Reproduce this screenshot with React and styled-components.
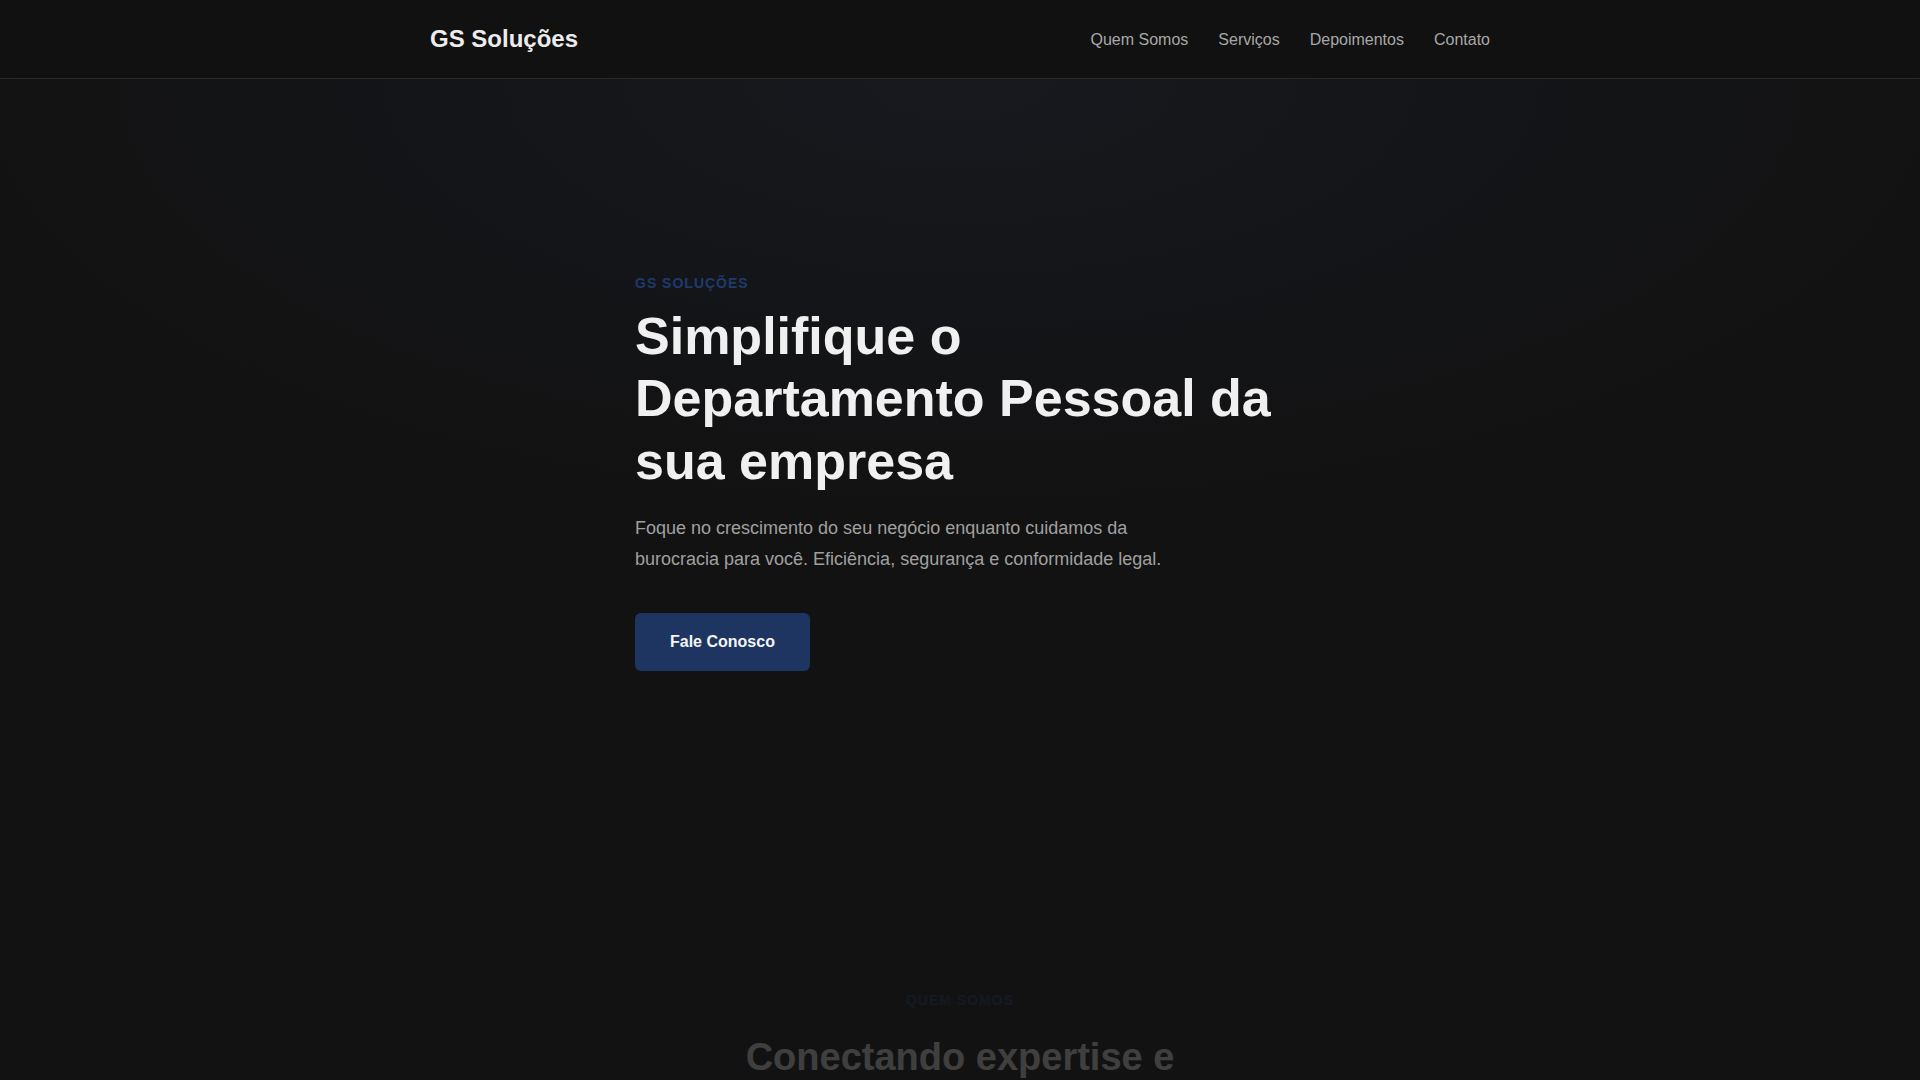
import styled, { createGlobalStyle } from "styled-components"
import { FileText, Calculator, Users, ShieldCheck, Clock, Briefcase, Phone, Mail, MapPin } from "lucide-react"

const GlobalStyle = createGlobalStyle`
    * { box-sizing: border-box; margin: 0; padding: 0; }
    html { overflow-y: scroll; }
    html::-webkit-scrollbar { width: 15px; background: #f1f1f1; }
    html::-webkit-scrollbar-thumb { background: #c1c1c1; border: 2px solid #f1f1f1; }
    body {
        background: #121212;
        color: #f0f0f0;
        font-family: "Liberation Sans", Arial, sans-serif;
    }
    a { color: inherit; text-decoration: none; }
`;

const Header = styled.header`
    background: #111111;
    border-bottom: 1px solid #2a2a2a;
`;
const Container = styled.div`
    max-width: 1100px;
    margin: 0 auto;
    padding: 0 20px;
`;
const NavBar = styled(Container)`
    height: 78px;
    display: flex;
    align-items: center;
    justify-content: space-between;
`;
const Logo = styled.a`
    font-size: 24px;
    font-weight: 700;
    color: #ececec;
`;
const NavLinks = styled.nav`
    display: flex;
    gap: 30px;
    padding-top: 1px;
`;
const NavLink = styled.a`
    font-size: 16px;
    color: #a8a8a8;
`;

const Hero = styled.section`
    background: radial-gradient(ellipse 1000px 430px at 50% 0%, #17191e 0%, #141518 55%, #121212 100%);
    padding: 196px 20px 201px;
`;
const HeroContent = styled.div`
    max-width: 650px;
    margin: 0 auto;
`;
const Eyebrow = styled.span`
    display: block;
    font-size: 14px;
    line-height: 16px;
    font-weight: 700;
    letter-spacing: 1px;
    text-transform: uppercase;
    color: #1f3a6c;
    margin-bottom: ${(p) => p.$gap || "14px"};
    text-align: ${(p) => (p.$center ? "center" : "left")};
`;
const HeroTitle = styled.h1`
    font-size: 52px;
    line-height: 1.2;
    font-weight: 700;
    color: #f0f0f0;
    margin-bottom: 21px;
`;
const Lead = styled.p`
    font-size: 18px;
    line-height: 1.7;
    color: #a0a0a0;
    max-width: 550px;
    margin-bottom: 39px;
`;
const Button = styled.a`
    display: inline-block;
    background: #1e3562;
    color: #f5f5f5;
    font-size: 16px;
    font-weight: 700;
    line-height: 18px;
    padding: 20px 35px;
    border-radius: 6px;
`;

const Section = styled.section`
    padding: 120px 20px;
    background: ${(p) => (p.$alt ? "#151515" : "#121212")};
`;
const Reveal = styled.div`
    opacity: 0.2;
`;
const SectionTitle = styled.h2`
    font-size: 38px;
    line-height: 1.2;
    font-weight: 700;
    color: #f0f0f0;
    text-align: center;
    max-width: 600px;
    margin: 0 auto 24px;
`;
const SectionText = styled.p`
    font-size: 18px;
    line-height: 1.7;
    color: #a0a0a0;
    text-align: center;
    max-width: 720px;
    margin: 0 auto 70px;
`;
const Grid = styled.div`
    max-width: 1060px;
    margin: 0 auto;
    display: grid;
    grid-template-columns: repeat(${(p) => p.$cols || 3}, 1fr);
    gap: 30px;
`;
const Card = styled.div`
    background: #1a1a1a;
    border: 1px solid #262626;
    border-radius: 10px;
    padding: 40px 32px;
    min-height: ${(p) => p.$min || "auto"};
`;
const CardIcon = styled.div`
    width: 56px;
    height: 56px;
    border-radius: 10px;
    background: #1e3562;
    color: #e8e8e8;
    display: flex;
    align-items: center;
    justify-content: center;
    margin-bottom: 24px;
`;
const CardTitle = styled.h3`
    font-size: 21px;
    color: #eeeeee;
    margin-bottom: 14px;
`;
const CardText = styled.p`
    font-size: 16px;
    line-height: 1.7;
    color: #9a9a9a;
`;
const Stat = styled.div`
    text-align: center;
    padding: 30px 10px;
    border-top: 2px solid #1e3562;
`;
const StatValue = styled.div`
    font-size: 44px;
    font-weight: 700;
    color: #f0f0f0;
    margin-bottom: 10px;
`;
const StatLabel = styled.div`
    font-size: 15px;
    color: #9a9a9a;
`;
const StepNumber = styled.div`
    font-size: 48px;
    font-weight: 700;
    color: #1e3562;
    margin-bottom: 16px;
`;
const Quote = styled.p`
    font-size: 17px;
    line-height: 1.8;
    color: #b0b0b0;
    font-style: italic;
    margin-bottom: 28px;
`;
const Author = styled.div`
    font-size: 16px;
    font-weight: 700;
    color: #eeeeee;
`;
const Role = styled.div`
    font-size: 14px;
    color: #888888;
    margin-top: 4px;
`;
const FaqList = styled.div`
    max-width: 800px;
    margin: 0 auto;
    display: flex;
    flex-direction: column;
    gap: 16px;
`;
const FaqItem = styled.div`
    background: #1a1a1a;
    border: 1px solid #262626;
    border-radius: 8px;
    padding: 28px 30px;
`;
const FaqQuestion = styled.h4`
    font-size: 18px;
    color: #eeeeee;
    margin-bottom: 12px;
`;
const ContactWrap = styled.div`
    max-width: 1060px;
    margin: 0 auto;
    display: grid;
    grid-template-columns: 1fr 1.3fr;
    gap: 60px;
`;
const InfoList = styled.div`
    display: flex;
    flex-direction: column;
    gap: 28px;
`;
const InfoRow = styled.div`
    display: flex;
    align-items: center;
    gap: 16px;
    font-size: 17px;
    color: #b0b0b0;
`;
const Form = styled.form`
    display: flex;
    flex-direction: column;
    gap: 18px;
`;
const Input = styled.input`
    background: #1a1a1a;
    border: 1px solid #2c2c2c;
    border-radius: 6px;
    padding: 18px 20px;
    font-size: 16px;
    color: #eeeeee;
    font-family: inherit;
`;
const TextArea = styled.textarea`
    background: #1a1a1a;
    border: 1px solid #2c2c2c;
    border-radius: 6px;
    padding: 18px 20px;
    font-size: 16px;
    color: #eeeeee;
    font-family: inherit;
    height: 180px;
    resize: none;
`;
const SubmitButton = styled.button`
    background: #1e3562;
    color: #f5f5f5;
    border: none;
    border-radius: 6px;
    padding: 20px 35px;
    font-size: 16px;
    font-weight: 700;
    font-family: inherit;
    align-self: flex-start;
`;
const Footer = styled.footer`
    background: #0e0e0e;
    border-top: 1px solid #2a2a2a;
    padding: 80px 20px 60px;
`;
const FooterGrid = styled(Container)`
    display: grid;
    grid-template-columns: 2fr 1fr 1fr;
    gap: 40px;
    padding-bottom: 50px;
    border-bottom: 1px solid #222222;
`;
const FooterTitle = styled.h5`
    font-size: 17px;
    color: #e0e0e0;
    margin-bottom: 18px;
`;
const FooterText = styled.p`
    font-size: 15px;
    line-height: 2;
    color: #888888;
`;
const Copyright = styled.p`
    text-align: center;
    font-size: 14px;
    color: #666666;
    padding-top: 30px;
`;

const services = [
    { icon: FileText, title: "Folha de Pagamento", text: "Cálculo completo da folha, encargos, férias e 13º salário com precisão e dentro dos prazos legais." },
    { icon: Users, title: "Admissões e Demissões", text: "Gestão de todo o processo de contratação e desligamento, com documentação e registros em dia." },
    { icon: Calculator, title: "Encargos e Tributos", text: "Apuração de INSS, FGTS e IRRF, com envio das obrigações acessórias como eSocial e DCTFWeb." },
    { icon: ShieldCheck, title: "Conformidade Legal", text: "Acompanhamento da legislação trabalhista para manter sua empresa segura e longe de passivos." },
    { icon: Clock, title: "Controle de Ponto", text: "Apuração de jornada, horas extras, banco de horas e adicionais de forma organizada e transparente." },
    { icon: Briefcase, title: "Consultoria Trabalhista", text: "Orientação especializada para decisões do dia a dia e para a estruturação do seu time." },
];

const steps = [
    { n: "01", title: "Diagnóstico", text: "Entendemos a rotina e as necessidades da sua empresa." },
    { n: "02", title: "Implantação", text: "Organizamos documentos, cadastros e processos." },
    { n: "03", title: "Execução", text: "Cuidamos das rotinas mensais com segurança." },
    { n: "04", title: "Acompanhamento", text: "Relatórios claros e suporte sempre que precisar." },
];

const testimonials = [
    { quote: "“Desde que contratamos a GS Soluções, a folha de pagamento deixou de ser uma preocupação. Atendimento rápido e muito profissional.”", name: "Mariana Costa", role: "Diretora, Costa Comércio" },
    { quote: "“Equipe extremamente competente. Conseguimos regularizar pendências antigas e hoje temos total tranquilidade com o eSocial.”", name: "Ricardo Almeida", role: "Sócio, Almeida Engenharia" },
    { quote: "“Processos organizados e comunicação transparente. Recomendo para qualquer empresa que queira focar no crescimento.”", name: "Fernanda Lima", role: "CEO, Lima Tecnologia" },
];

const faqs = [
    { q: "Quais empresas vocês atendem?", a: "Atendemos empresas de todos os portes e segmentos, do MEI com funcionário às médias empresas." },
    { q: "Como funciona a migração do meu departamento pessoal?", a: "Fazemos todo o levantamento de informações e cuidamos da transição sem interromper sua rotina." },
    { q: "Vocês enviam as obrigações do eSocial?", a: "Sim. Todos os eventos periódicos e não periódicos são transmitidos dentro dos prazos." },
    { q: "Como recebo os relatórios mensais?", a: "Os relatórios são enviados por e-mail e ficam disponíveis sempre que você precisar." },
    { q: "Qual o prazo para começar?", a: "Após o diagnóstico inicial, a implantação costuma ser concluída em poucos dias." },
];

const App = () => {
    return (
        <>
            <GlobalStyle />
            <Header>
                <NavBar>
                    <Logo href="#">GS Soluções</Logo>
                    <NavLinks>
                        <NavLink href="#sobre">Quem Somos</NavLink>
                        <NavLink href="#servicos">Serviços</NavLink>
                        <NavLink href="#depoimentos">Depoimentos</NavLink>
                        <NavLink href="#contato">Contato</NavLink>
                    </NavLinks>
                </NavBar>
            </Header>

            <Hero>
                <HeroContent>
                    <Eyebrow>GS Soluções</Eyebrow>
                    <HeroTitle>Simplifique o Departamento Pessoal da sua empresa</HeroTitle>
                    <Lead>
                        Foque no crescimento do seu negócio enquanto cuidamos da burocracia para você.
                        Eficiência, segurança e conformidade legal.
                    </Lead>
                    <Button href="#contato">Fale Conosco</Button>
                </HeroContent>
            </Hero>

            <Section id="sobre">
                <Reveal>
                    <Eyebrow $center $gap="27px">Quem Somos</Eyebrow>
                    <SectionTitle>Conectando expertise e simplicidade para o seu negócio</SectionTitle>
                    <SectionText>
                        A GS Soluções nasceu para tirar das empresas o peso da rotina do Departamento Pessoal.
                        Com uma equipe experiente e processos bem definidos, entregamos segurança e tranquilidade
                        para que você possa se dedicar ao que realmente importa.
                    </SectionText>
                    <Grid $cols={3}>
                        <Stat><StatValue>+150</StatValue><StatLabel>Empresas atendidas</StatLabel></Stat>
                        <Stat><StatValue>+10</StatValue><StatLabel>Anos de experiência</StatLabel></Stat>
                        <Stat><StatValue>100%</StatValue><StatLabel>Compromisso com prazos</StatLabel></Stat>
                    </Grid>
                </Reveal>
            </Section>

            <Section id="servicos" $alt>
                <Reveal>
                    <Eyebrow $center $gap="24px">Serviços</Eyebrow>
                    <SectionTitle>Soluções completas para o seu DP</SectionTitle>
                    <SectionText>Tudo o que a sua empresa precisa para manter a gestão de pessoas em dia.</SectionText>
                    <Grid $cols={3}>
                        {services.map(({ icon: Icon, title, text }) => (
                            <Card key={title} $min="300px">
                                <CardIcon><Icon size={26} /></CardIcon>
                                <CardTitle>{title}</CardTitle>
                                <CardText>{text}</CardText>
                            </Card>
                        ))}
                    </Grid>
                </Reveal>
            </Section>

            <Section>
                <Reveal>
                    <Eyebrow $center $gap="24px">Como Funciona</Eyebrow>
                    <SectionTitle>Um processo simples e transparente</SectionTitle>
                    <SectionText>Em poucas etapas, sua empresa passa a contar com um Departamento Pessoal eficiente.</SectionText>
                    <Grid $cols={4}>
                        {steps.map((s) => (
                            <Card key={s.n} $min="260px">
                                <StepNumber>{s.n}</StepNumber>
                                <CardTitle>{s.title}</CardTitle>
                                <CardText>{s.text}</CardText>
                            </Card>
                        ))}
                    </Grid>
                </Reveal>
            </Section>

            <Section id="depoimentos" $alt>
                <Reveal>
                    <Eyebrow $center $gap="24px">Depoimentos</Eyebrow>
                    <SectionTitle>O que nossos clientes dizem</SectionTitle>
                    <SectionText>A confiança de quem já simplificou a rotina com a GS Soluções.</SectionText>
                    <Grid $cols={3}>
                        {testimonials.map((t) => (
                            <Card key={t.name} $min="340px">
                                <Quote>{t.quote}</Quote>
                                <Author>{t.name}</Author>
                                <Role>{t.role}</Role>
                            </Card>
                        ))}
                    </Grid>
                </Reveal>
            </Section>

            <Section>
                <Reveal>
                    <Eyebrow $center $gap="24px">Dúvidas Frequentes</Eyebrow>
                    <SectionTitle>Perguntas frequentes</SectionTitle>
                    <SectionText>Reunimos as principais dúvidas de quem está conhecendo nossos serviços.</SectionText>
                    <FaqList>
                        {faqs.map((f) => (
                            <FaqItem key={f.q}>
                                <FaqQuestion>{f.q}</FaqQuestion>
                                <CardText>{f.a}</CardText>
                            </FaqItem>
                        ))}
                    </FaqList>
                </Reveal>
            </Section>

            <Section id="contato" $alt>
                <Reveal>
                    <Eyebrow $center $gap="24px">Contato</Eyebrow>
                    <SectionTitle>Vamos conversar?</SectionTitle>
                    <SectionText>Preencha o formulário e nossa equipe entrará em contato o mais breve possível.</SectionText>
                    <ContactWrap>
                        <InfoList>
                            <InfoRow><CardIcon><Phone size={24} /></CardIcon>(11) 99999-0000</InfoRow>
                            <InfoRow><CardIcon><Mail size={24} /></CardIcon>contato@gssolucoes.com.br</InfoRow>
                            <InfoRow><CardIcon><MapPin size={24} /></CardIcon>São Paulo - SP</InfoRow>
                        </InfoList>
                        <Form onSubmit={(e) => e.preventDefault()}>
                            <Input placeholder="Nome" />
                            <Input placeholder="E-mail" />
                            <Input placeholder="Telefone" />
                            <TextArea placeholder="Mensagem" />
                            <SubmitButton type="submit">Enviar Mensagem</SubmitButton>
                        </Form>
                    </ContactWrap>
                </Reveal>
            </Section>

            <Footer>
                <FooterGrid>
                    <div>
                        <FooterTitle>GS Soluções</FooterTitle>
                        <FooterText>Departamento Pessoal com eficiência, segurança e conformidade legal para a sua empresa.</FooterText>
                    </div>
                    <div>
                        <FooterTitle>Links</FooterTitle>
                        <FooterText>Quem Somos<br />Serviços<br />Depoimentos<br />Contato</FooterText>
                    </div>
                    <div>
                        <FooterTitle>Contato</FooterTitle>
                        <FooterText>(11) 99999-0000<br />contato@gssolucoes.com.br<br />São Paulo - SP</FooterText>
                    </div>
                </FooterGrid>
                <Copyright>© 2024 GS Soluções. Todos os direitos reservados.</Copyright>
            </Footer>
        </>
    )
}
export default App;
